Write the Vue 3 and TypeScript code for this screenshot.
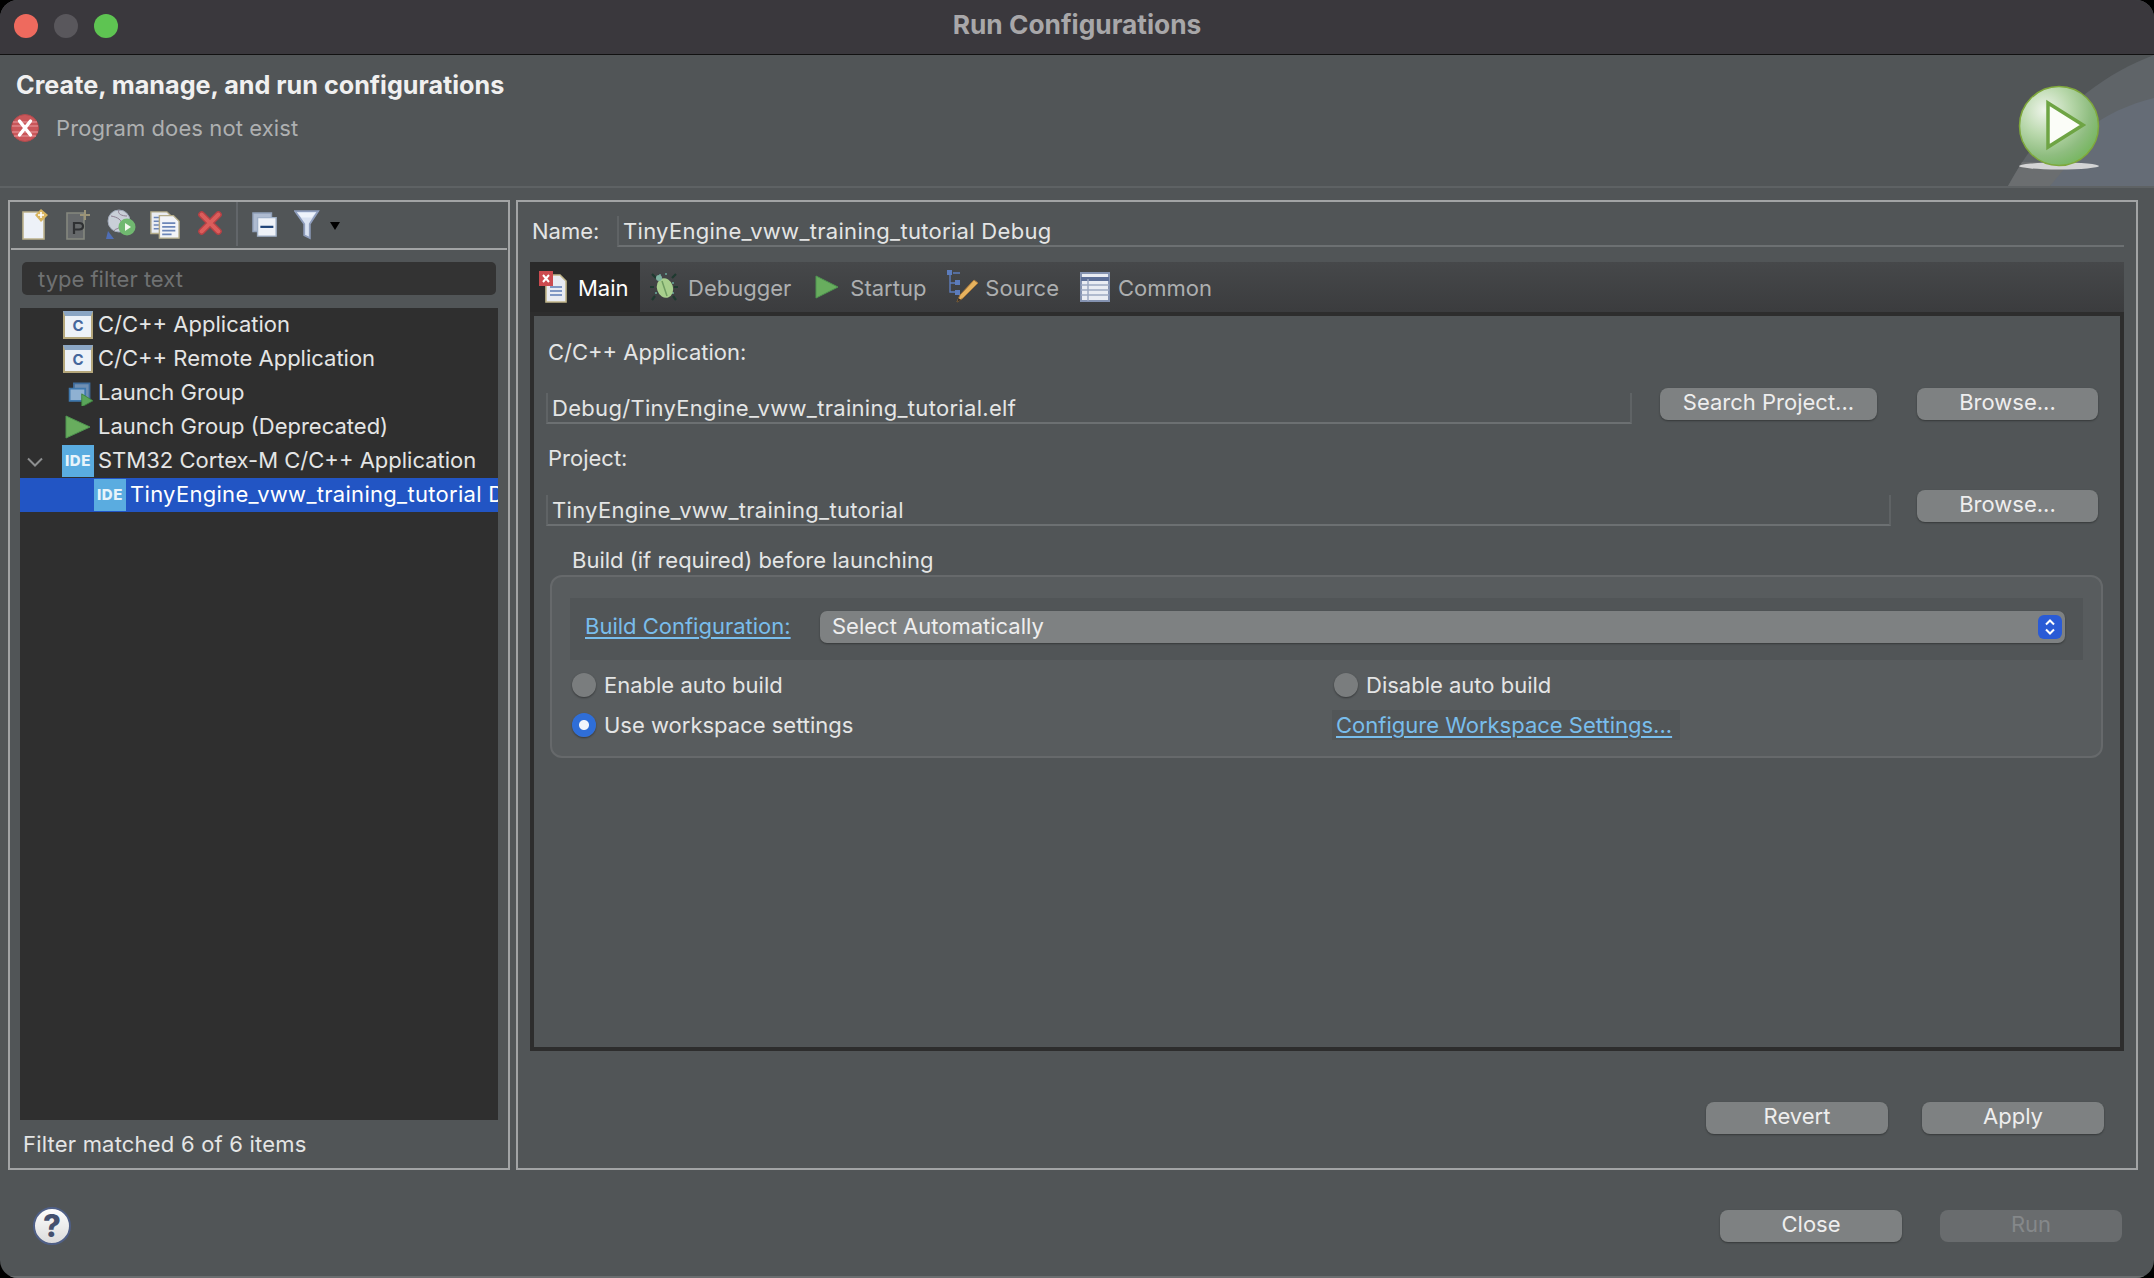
<template>
  <div class="window">
    <header class="titlebar">
      <div class="lights">
        <span class="light red"></span>
        <span class="light grey"></span>
        <span class="light green"></span>
      </div>
      <span class="title">Run Configurations</span>
    </header>

    <section class="banner">
      <div class="banner-text">
        <h1>Create, manage, and run configurations</h1>
        <div class="banner-msg">
          <svg class="err-icon" viewBox="0 0 30 30" width="30" height="30">
            <circle cx="15" cy="15" r="13.5" fill="#c9575a" stroke="#b04a4d" />
            <path d="M3 9h24M2 13h26M2 19h26M4 23h22" stroke="#dd8487" stroke-width="1.4" />
            <path d="M9.5 22 20.5 8M9.5 8l11 14" stroke="#fff" stroke-width="3.4" stroke-linecap="round" />
          </svg>
          <span>Program does not exist</span>
        </div>
      </div>
      <!-- wizard art in the corner -->
      <svg class="banner-art" viewBox="0 0 254 131" width="254" height="131">
        <defs>
          <radialGradient id="ball" cx="0.32" cy="0.3" r="0.8">
            <stop offset="0" stop-color="#eef4ea" />
            <stop offset="0.4" stop-color="#b9d8ac" />
            <stop offset="0.72" stop-color="#8fbd80" />
            <stop offset="0.92" stop-color="#7ab765" />
            <stop offset="1" stop-color="#7cc04f" />
          </radialGradient>
        </defs>
        <path d="M108 131C140 70 195 22 254 0V131Z" fill="#5f6468" />
        <path d="M150 131C160 85 205 55 254 43V131Z" fill="#656c76" />
        <path d="M108 131 122 107H170L150 131Z" fill="#6b6e70" />
        <ellipse cx="159" cy="111" rx="40" ry="3.5" fill="#e6e6e6" opacity="0.85" />
        <circle cx="159" cy="71" r="39.5" fill="url(#ball)" stroke="#7fa83c" stroke-width="1.5" />
        <path d="M148 48 183 70 148 92Z" fill="#fbfdf8" stroke="#6ea444" stroke-width="3.5" />
      </svg>
    </section>

    <main class="main">
      <aside class="panel left">
        <div class="toolbar">
          <svg viewBox="0 0 28 32" width="28" height="32" class="tb new">
            <path d="M1 3h15l6 6v21H1Z" fill="#edf1f8" stroke="#bdb38d" stroke-width="1.6" />
            <path d="M19 0l7 6-7 7-6-7Z" fill="#d8b560" />
            <path d="M19 3v6M16 6h6" stroke="#fff" stroke-width="1.6" />
          </svg>
          <svg viewBox="0 0 28 32" width="28" height="32" class="tb proto">
            <path d="M1 4h17v26H1Z" fill="#66696b" stroke="#85887f" stroke-width="1.6" />
            <path d="M8 25V14h5q4 0 4 3.2T13 20.500H8" fill="none" stroke="#2f3133" stroke-width="2.2" />
            <path d="M19 1v10M14 6h10" stroke="#9c9477" stroke-width="2" />
          </svg>
          <svg viewBox="0 0 32 32" width="32" height="32" class="tb globe">
            <circle cx="13" cy="12" r="11" fill="#c9cfd8" stroke="#9fa8b8" />
            <path d="M5 7c6 1 12 4 10 9s-6 3-7 6M13 1c-2 4 3 6 8 6" stroke="#8d7f92" fill="none" />
            <path d="M0 30l2-8 6 8Z" fill="#4f6eb6" />
            <circle cx="21" cy="18" r="8.500" fill="#70b870" />
            <path d="M19 14l6 4-6 4Z" fill="#f3f8ef" />
          </svg>
          <svg viewBox="0 0 32 32" width="30" height="30" class="tb copy">
            <path d="M1 2h17l4 4v19H1Z" fill="#e9ecf2" stroke="#b5ad8a" stroke-width="1.5" />
            <path d="M4 8h6M4 12h6M4 16h6M4 20h6" stroke="#6c86b8" stroke-width="1.6" />
            <path d="M10 6h15l6 6v18H10Z" fill="#f2f4f8" stroke="#b5ad8a" stroke-width="1.5" />
            <path d="M13 14h14M13 18h14M13 22h14M13 26h10" stroke="#6c86b8" stroke-width="1.7" />
          </svg>
          <svg viewBox="0 0 28 28" width="26" height="26" class="tb del">
            <path d="M5 5l18 18M23 5 5 23" stroke="#b54145" stroke-width="7.500" stroke-linecap="round" />
            <path d="M5 5l18 18M23 5 5 23" stroke="#dc5d5b" stroke-width="4.500" stroke-linecap="round" />
          </svg>
          <span class="tb-sep"></span>
          <svg viewBox="0 0 28 28" width="26" height="26" class="tb collapse">
            <path d="M1 1h20v20H1Z" fill="#aebbd0" stroke="#8f9fb8" stroke-width="1.5" />
            <path d="M6 6h20v20H6Z" fill="#eef2f8" stroke="#9fb0c8" stroke-width="1.5" />
            <path d="M9 16h14" stroke="#1f4478" stroke-width="2.4" />
          </svg>
          <svg viewBox="0 0 28 32" width="26" height="30" class="tb funnel">
            <path d="M1 1h25L17 15v15l-6-3V15Z" fill="#d9e2f2" stroke="#8e9dbc" stroke-width="2" />
            <path d="M4 3h19l-4 5H8Z" fill="#eef3fb" />
          </svg>
          <span class="drop"></span>
        </div>

        <div class="filter">type filter text</div>

        <div class="tree">
          <div
            v-for="item in treeItems"
            :key="item.label"
            class="tree-row"
            :class="{ selected: item.selected }"
          >
            <svg v-if="item.open" class="chevron" viewBox="0 0 16 10" width="16" height="10">
              <path d="M1 1.500 8 8.500 15 1.500" fill="none" stroke="#8d8f90" stroke-width="2" />
            </svg>
            <span class="tree-icon" :style="{ marginLeft: item.indent + 'px' }">
              <span v-if="item.icon === 'c'" class="ic-c"><b>C</b></span>
              <span v-else-if="item.icon === 'ide'" class="ic-ide">IDE</span>
              <svg v-else-if="item.icon === 'group'" viewBox="0 0 32 30" width="28" height="26" class="ic-group">
                <path d="M9 4h18v18H9Z" fill="#6f8fb3" stroke="#3f6c9c" stroke-width="2" />
                <path d="M4 10h18v14H4Z" fill="#8fb1d2" stroke="#3f78ad" stroke-width="2" />
                <path d="M18 16 31 24 18 31Z" fill="#5aa55a" stroke="#3d7f3d" />
              </svg>
              <svg v-else viewBox="0 0 32 30" width="32" height="30">
                <path d="M4 4 28 15 4 26Z" fill="#68ad5e" stroke="#4f9550" />
              </svg>
            </span>
            <span class="tree-label" :class="{ us: item.selected }">{{ item.label }}</span>
          </div>
        </div>

        <div class="status">Filter matched 6 of 6 items</div>
      </aside>

      <section class="panel right">
        <div class="name-row">
          <label class="name-label">Name:</label>
          <div class="name-field us">TinyEngine_vww_training_tutorial Debug</div>
        </div>

        <div class="folder">
          <div class="tabs">
            <div
              v-for="tab in tabs"
              :key="tab.label"
              class="tab"
              :class="{ active: tab.label === 'Main' }"
            >
              <svg v-if="tab.label === 'Main'" viewBox="0 0 30 32" width="30" height="32">
                <path d="M8 4h14l6 6v21H8Z" fill="#e8ebf2" stroke="#c2b78b" stroke-width="1.6" />
                <path d="M12 16h12M12 20h12M12 24h12" stroke="#7f97c4" stroke-width="1.8" />
                <rect x="1" y="0" width="14" height="15" fill="#cb4a4f" />
                <path d="M5 4l6 7M11 4l-6 7" stroke="#fff" stroke-width="2" />
              </svg>
              <svg v-else-if="tab.label === 'Debugger'" viewBox="0 0 28 32" width="28" height="32">
                <path d="M6 7 2 3M22 7l4-4M4 16H0M24 16h4M5 25l-3 4M23 25l3 4" stroke="#1f3a30" stroke-width="2.2" />
                <path d="M9 4h2M15 3h2M22 12h2M5 22h2M22 22h2" stroke="#5f8f86" stroke-width="2" />
                <ellipse cx="15" cy="17" rx="8" ry="10" fill="#a8cf8d" transform="rotate(-18 15 17)" />
                <path d="M12 10 17 25" stroke="#6f9c62" stroke-width="1.5" />
                <circle cx="9" cy="7" r="3" fill="#7eb3a0" />
              </svg>
              <svg v-else-if="tab.label === 'Startup'" viewBox="0 0 26 28" width="26" height="28">
                <path d="M2 3 24 14 2 25Z" fill="#68ad5e" stroke="#4f9550" />
              </svg>
              <svg v-else-if="tab.label === 'Source'" viewBox="0 0 32 36" width="32" height="36">
                <path d="M3 5v18h7M3 14h7M6 4h7" stroke="#5c7cbc" stroke-width="1.4" fill="none" />
                <path d="M0 1h5v5H0ZM8 11h5v5H8ZM8 21h5v5H8Z" fill="#5c7cbc" />
                <path d="M10 33l3-7 14-15 4 3-15 15Z" fill="#e6b25e" stroke="#a9783a" />
                <path d="M10 33l1.500-4 2.500 2Z" fill="#3b3228" />
              </svg>
              <svg v-else viewBox="0 0 30 32" width="30" height="32">
                <rect x="1" y="2" width="28" height="28" fill="#e9ecf3" stroke="#8492b0" stroke-width="2" />
                <path d="M1 8h28" stroke="#5d6f97" stroke-width="4" />
                <path d="M8 8v22M1 14h28M1 19h28M1 24h28" stroke="#9da9c2" stroke-width="1.500" />
              </svg>
              <span>{{ tab.label }}</span>
            </div>
          </div>

          <div class="tab-body">
            <div class="field-label first">C/C++ Application:</div>
            <div class="form-row">
              <div class="line-field app-field us">Debug/TinyEngine_vww_training_tutorial.elf</div>
              <button class="btn search">Search Project...</button>
              <button class="btn browse">Browse...</button>
            </div>
            <div class="field-label second">Project:</div>
            <div class="form-row row-two">
              <div class="line-field project-field us">TinyEngine_vww_training_tutorial</div>
              <button class="btn browse">Browse...</button>
            </div>

            <div class="group-title">Build (if required) before launching</div>
            <div class="group">
              <div class="config-strip">
                <a class="link config-link">Build Configuration:</a>
                <div class="select">
                  <span>Select Automatically</span>
                  <span class="stepper">
                    <svg viewBox="0 0 24 24" width="24" height="24">
                      <path d="M8 9.500 12 5.500 16 9.500M8 14.500 12 18.500 16 14.500" fill="none" stroke="#fff" stroke-width="2" />
                    </svg>
                  </span>
                </div>
              </div>
              <div class="radios">
                <div class="radio-item"><span class="radio"></span>Enable auto build</div>
                <div class="radio-item"><span class="radio"></span>Disable auto build</div>
                <div class="radio-item"><span class="radio on"></span>Use workspace settings</div>
                <div class="radio-item"><a class="link ws-link">Configure Workspace Settings...</a></div>
              </div>
            </div>
          </div>
        </div>

        <div class="actions">
          <button class="btn wide">Revert</button>
          <button class="btn wide">Apply</button>
        </div>
      </section>
    </main>

    <footer class="footer">
      <span class="help">?</span>
      <div class="footer-btns">
        <button class="btn wide">Close</button>
        <button class="btn wide disabled">Run</button>
      </div>
    </footer>
  </div>
</template>

<script setup lang="ts">
type TreeItem = {
  label: string
  icon: 'c' | 'group' | 'play' | 'ide'
  indent: number
  open?: boolean
  selected?: boolean
}

const treeItems: TreeItem[] = [
  { label: 'C/C++ Application', icon: 'c', indent: 42 },
  { label: 'C/C++ Remote Application', icon: 'c', indent: 42 },
  { label: 'Launch Group', icon: 'group', indent: 42 },
  { label: 'Launch Group (Deprecated)', icon: 'play', indent: 42 },
  { label: 'STM32 Cortex-M C/C++ Application', icon: 'ide', indent: 42, open: true },
  { label: 'TinyEngine_vww_training_tutorial Debug', icon: 'ide', indent: 74, selected: true },
]

const tabs = [
  { label: 'Main' },
  { label: 'Debugger' },
  { label: 'Startup' },
  { label: 'Source' },
  { label: 'Common' },
]
</script>

<style>
html,
body {
  margin: 0;
  background: #000;
}
</style>

<style scoped>
.window {
  width: 2154px;
  height: 1278px;
  overflow: hidden;
  box-sizing: border-box;
  border-radius: 18px;
  background: #515557;
  color: #e4e5e5;
  font-family: Inter, "Noto Sans", sans-serif;
  font-size: 22px;
  display: flex;
  flex-direction: column;
}

.us {
  letter-spacing: 0.3px;
}

.titlebar {
  position: relative;
  flex: none;
  height: 55px;
  box-sizing: border-box;
  border-bottom: 1px solid #111;
  background: #3a383d;
  display: flex;
  align-items: center;
  justify-content: center;
}

.lights {
  position: absolute;
  left: 14px;
  top: 14px;
  display: flex;
  gap: 16px;
}

.light {
  width: 24px;
  height: 24px;
  border-radius: 50%;
}

.red { background: #ee6a5e; }
.grey { background: #59575c; }
.green { background: #5ec452; }

.title {
  font-size: 26.3px;
  font-weight: 700;
  color: #a8a7a9;
  margin-top: -5px;
}

.banner {
  position: relative;
  flex: none;
  height: 133px;
  box-sizing: border-box;
  border-bottom: 2px solid #5e6264;
  overflow: hidden;
}

.banner-text {
  padding: 10px 0 0 16px;
}

.banner h1 {
  margin: 0;
  font-size: 25.2px;
  line-height: 40px;
  font-weight: 700;
  color: #f0f0f0;
}

.banner-msg {
  margin-top: 5px;
  margin-left: -6px;
  display: flex;
  align-items: center;
  gap: 16px;
  color: #aeb0b1;
  height: 36px;
  letter-spacing: 0.1px;
}

.banner-art {
  position: absolute;
  right: 0;
  top: 0;
}

.main {
  flex: none;
  height: 982px;
  box-sizing: border-box;
  padding: 12px 16px 0 8px;
  display: grid;
  grid-template-columns: 502px 1622px;
  gap: 6px;
}

.panel {
  height: 970px;
  box-sizing: border-box;
  border: 2px solid #a2a4a5;
}

.left {
  display: flex;
  flex-direction: column;
}

.toolbar {
  position: relative;
  flex: none;
  height: 46px;
  margin: 0 1px;
  border-bottom: 2px solid #a2a4a5;
  display: flex;
  align-items: center;
  box-sizing: content-box;
}

.tb {
  position: absolute;
}

/* icons on the strip sit at uneven spots, as in the real toolbar */
.new { left: 11px; top: 7px; }
.proto { left: 55px; top: 7px; }
.globe { left: 95px; top: 7px; }
.copy { left: 139px; top: 8px; }
.del { left: 186px; top: 8px; }
.collapse { left: 241px; top: 10px; }
.funnel { left: 283px; top: 8px; }

.tb-sep {
  position: absolute;
  left: 225px;
  top: 0;
  width: 2px;
  height: 44px;
  background: #62666a;
}

.drop {
  position: absolute;
  left: 319px;
  top: 20px;
  border-left: 5px solid transparent;
  border-right: 5px solid transparent;
  border-top: 8px solid #000;
}

.filter {
  flex: none;
  margin: 12px 12px 0;
  height: 33px;
  box-sizing: border-box;
  padding-left: 16px;
  border-radius: 5px;
  background: #333;
  color: #6f7172;
  line-height: 35px;
}

.tree {
  flex: none;
  margin: 13px 10px 0;
  height: 812px;
  background: #2f2f2f;
  overflow: hidden;
}

.tree-row {
  position: relative;
  height: 34px;
  display: flex;
  align-items: center;
  white-space: nowrap;
  overflow: hidden;
}

.tree-row.selected {
  background: #2255c4;
  color: #fff;
}

.tree-label {
  padding-bottom: 3px;
}

.chevron {
  position: absolute;
  left: 7px;
  top: 13px;
}

.tree-icon {
  flex: none;
  width: 32px;
  height: 32px;
  margin-right: 4px;
  display: flex;
  align-items: center;
  justify-content: center;
}

.ic-group {
  margin-left: 4px;
}

.ic-c {
  width: 30px;
  height: 28px;
  box-sizing: border-box;
  border: 2px solid #b5a77b;
  border-top: 5px solid #8ba6c4;
  background: #edf2f8;
  color: #46679c;
  font-size: 15px;
  line-height: 20px;
  text-align: center;
}

.ic-ide {
  width: 32px;
  height: 32px;
  background: #5aace0;
  color: #e8f4fb;
  font-size: 15px;
  font-weight: 800;
  line-height: 32px;
  text-align: center;
  letter-spacing: 0.6px;
}

.status {
  padding: 10px 0 0 13px;
  line-height: 28px;
  letter-spacing: 0.2px;
}

.right {
  padding: 0 12px;
  display: flex;
  flex-direction: column;
}

.name-row {
  flex: none;
  height: 60px;
  display: flex;
  align-items: flex-start;
}

.name-label {
  margin-top: 14px;
  width: 87px;
  box-sizing: border-box;
  flex: none;
  padding-left: 2px;
  line-height: 30px;
}

.name-field {
  flex: 1;
  margin-top: 14px;
  height: 31px;
  padding-left: 4px;
  box-sizing: border-box;
  border-bottom: 2px solid #6c7072;
  border-left: 2px solid #5f6365;
  line-height: 30px;
}

.folder {
  flex: none;
  height: 789px;
  display: flex;
  flex-direction: column;
}

.tabs {
  flex: none;
  height: 50px;
  background: linear-gradient(#46484a, #3b3c3e);
  display: flex;
}

.tab {
  height: 50px;
  display: flex;
  align-items: center;
  color: #adafb0;
}

.tab span {
  padding-top: 1px;
}

.tab svg {
  flex: none;
}

.tab:nth-child(1) { width: 110px; padding-left: 8px; gap: 10px; box-sizing: border-box; }
.tab:nth-child(2) { margin-left: 10px; gap: 10px; }
.tab:nth-child(3) { margin-left: 23px; gap: 10px; }
.tab:nth-child(4) { margin-left: 21px; gap: 6px; }
.tab:nth-child(5) { margin-left: 21px; gap: 8px; }

.tab.active {
  background: #2a2a2a;
  color: #fff;
}

.tab-body {
  flex: 1;
  box-sizing: border-box;
  border: 4px solid #2d2d2d;
  background: #515557;
  padding-left: 12px;
  padding-right: 22px;
}

.field-label {
  height: 32px;
  line-height: 32px;
  padding-left: 2px;
}

.first { margin-top: 20px; }
.second { margin-top: 18px; }

.form-row {
  margin-top: 20px;
  height: 36px;
  display: flex;
  align-items: flex-start;
}

.row-two {
  margin-top: 16px;
}

.line-field {
  flex: none;
  height: 31px;
  margin-top: 5px;
  box-sizing: border-box;
  padding-left: 4px;
  line-height: 30px;
  border-left: 2px solid #5f6365;
  border-right: 2px solid #5f6365;
  border-bottom: 2px solid #6c7072;
}

.app-field {
  width: 1086px;
  margin-right: 28px;
}

.project-field {
  width: 1345px;
  margin-right: 26px;
}

.btn {
  flex: none;
  height: 32px;
  padding: 0;
  border: none;
  border-radius: 8px;
  background: #7e8182;
  box-shadow: 0 1px 2px rgba(0, 0, 0, 0.35);
  color: #eeeeee;
  font-family: inherit;
  font-size: 22px;
  line-height: 28px;
  padding-bottom: 4px;
}

.search {
  width: 217px;
  margin-right: 40px;
}

.browse {
  width: 181px;
}

.wide {
  width: 182px;
}

.disabled {
  background: #696c6e;
  color: #85888a;
  box-shadow: none;
}

.group-title {
  margin-top: 19px;
  margin-left: 26px;
  height: 30px;
  line-height: 30px;
}

.group {
  margin-left: 4px;
  width: 1553px;
  height: 183px;
  box-sizing: border-box;
  border: 2px solid #66696b;
  border-radius: 12px;
  background: #585c5e;
  padding-top: 21px;
}

.config-strip {
  margin: 0 18px;
  height: 62px;
  box-sizing: border-box;
  padding-top: 13px;
  background: #515557;
  display: flex;
  align-items: flex-start;
}

.link {
  color: #79bdec;
  text-decoration: underline;
  text-underline-offset: 3px;
}

.config-link {
  width: 250px;
  flex: none;
  padding-left: 15px;
  box-sizing: border-box;
  line-height: 30px;
}

.select {
  position: relative;
  width: 1245px;
  height: 32px;
  border-radius: 7px;
  background: #7e8182;
  box-shadow: 0 1px 2px rgba(0, 0, 0, 0.35);
  padding-left: 12px;
  box-sizing: border-box;
  line-height: 30px;
  color: #eee;
}

.stepper {
  position: absolute;
  right: 3px;
  top: 4px;
  width: 24px;
  height: 24px;
  border-radius: 6px;
  background: #2a5bd6;
}

.radios {
  margin-left: 20px;
  margin-top: 5px;
  display: grid;
  grid-template-columns: 762px 1fr;
  grid-auto-rows: 40px;
}

.radio-item {
  display: flex;
  align-items: center;
  gap: 8px;
}

.radio {
  width: 24px;
  height: 24px;
  border-radius: 50%;
  background: #7a7d7e;
  box-shadow: 0 1px 2px rgba(0, 0, 0, 0.4);
}

.radio.on {
  background: radial-gradient(circle, #f2f5fb 0 4.500px, #2f6ed8 5.500px);
}

.ws-link {
  margin-left: -2px;
  padding: 2px 8px 2px 4px;
  background: #525658;
}

.actions {
  flex: none;
  margin-top: 51px;
  margin-right: 20px;
  display: flex;
  justify-content: flex-end;
  gap: 34px;
}

.footer {
  flex: 1;
  position: relative;
  display: flex;
  justify-content: flex-end;
  padding: 40px 32px 0 0;
  box-sizing: border-box;
  border-bottom: 2px solid #6a6d6f;
}

.help {
  position: absolute;
  left: 33px;
  top: 37px;
  width: 38px;
  height: 38px;
  box-sizing: border-box;
  border: 2px solid #4f5f86;
  border-radius: 50%;
  background: linear-gradient(#fdfdfd, #dcdcdc);
  color: #44506e;
  font-size: 31px;
  font-weight: 800;
  line-height: 34px;
  text-align: center;
}

.footer-btns {
  display: flex;
  gap: 38px;
}
</style>
